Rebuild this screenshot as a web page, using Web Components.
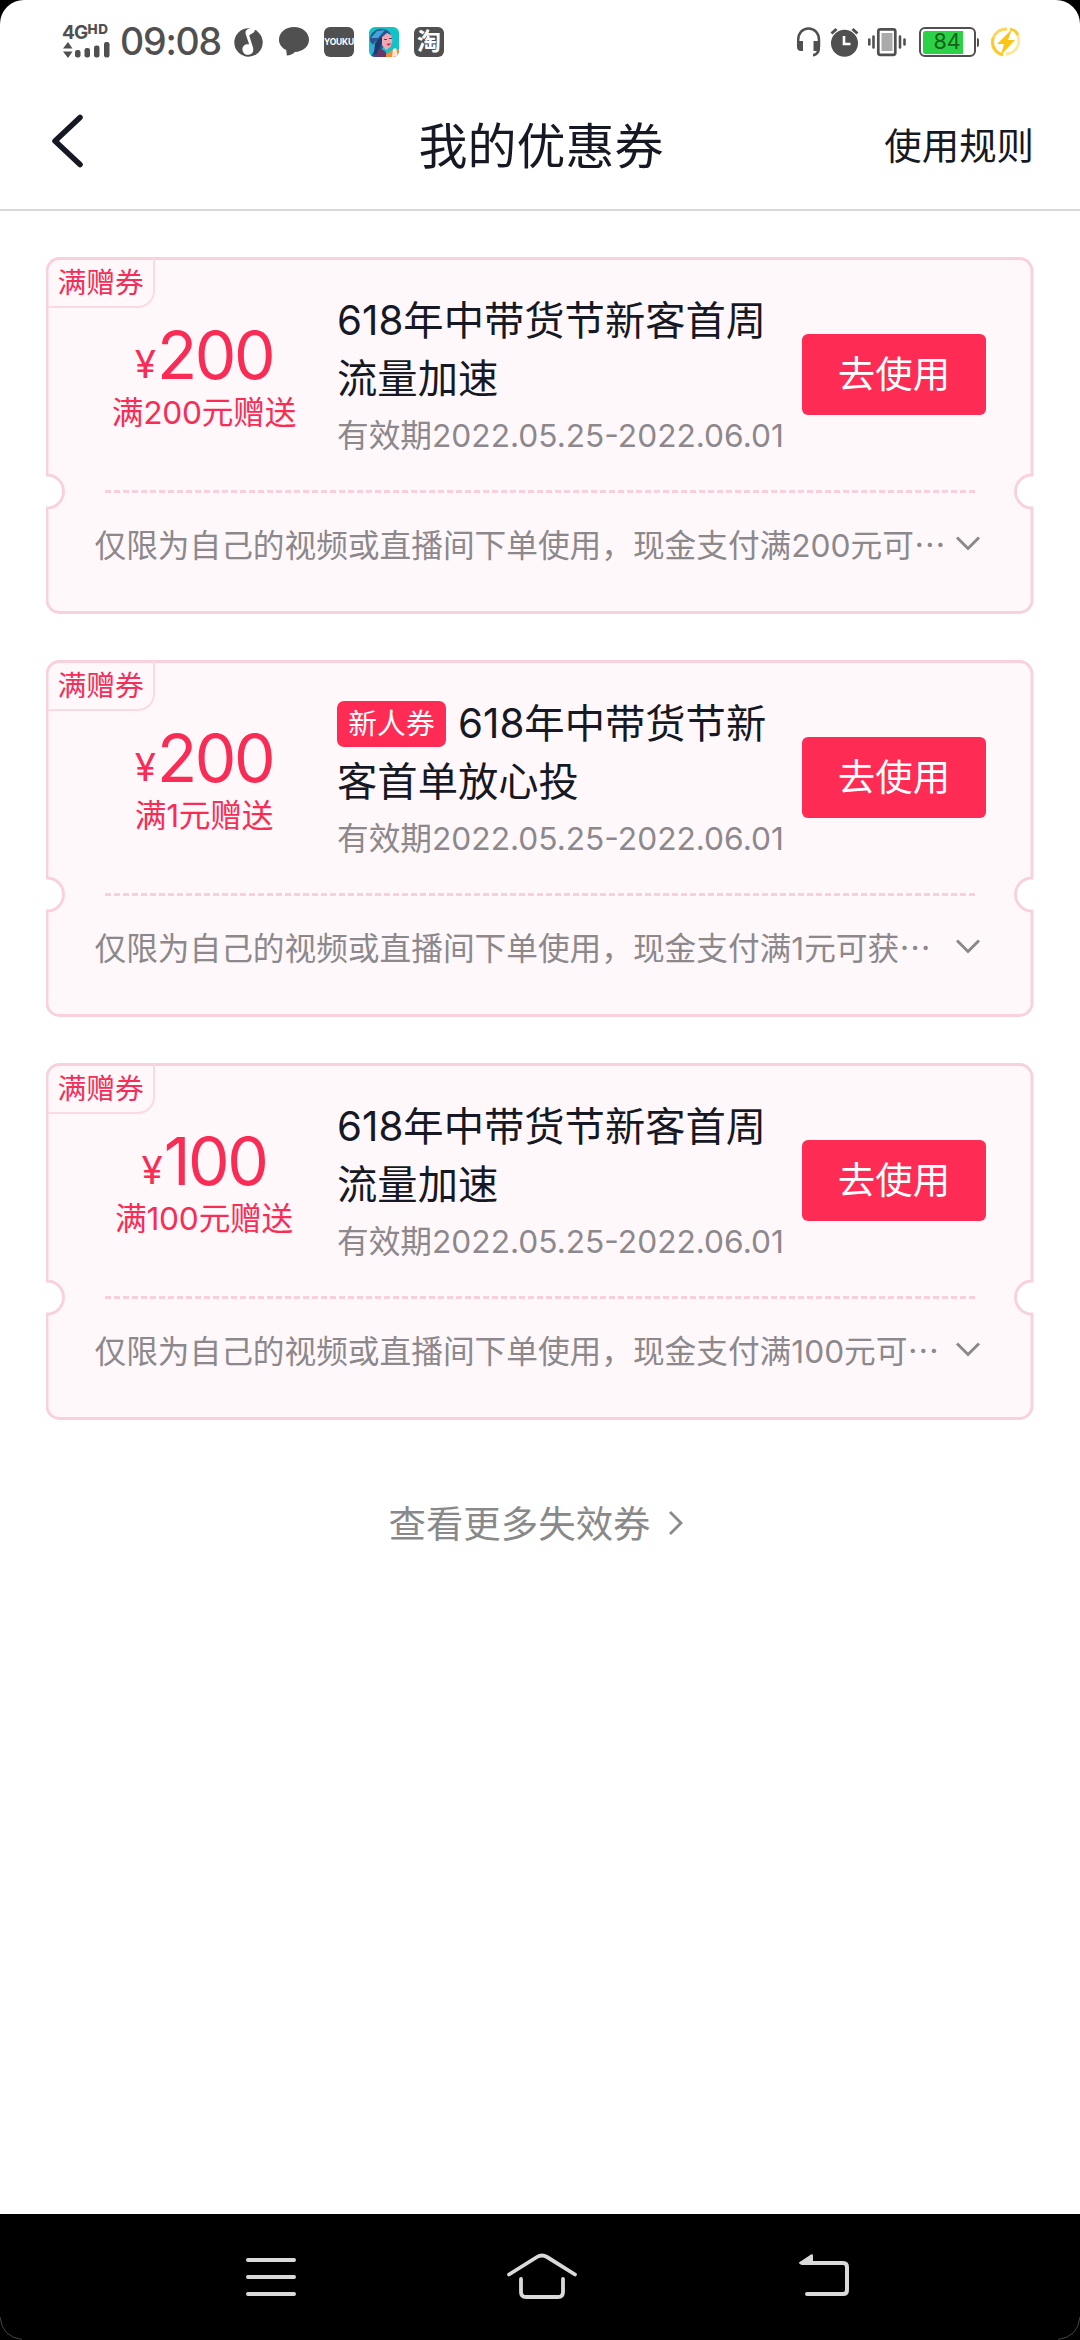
<!DOCTYPE html>
<html lang="zh-CN">
<head>
<meta charset="utf-8">
<title>我的优惠券</title>
<style>
html,body{margin:0;padding:0;background:#000}
body{width:1080px;height:2340px;overflow:hidden;font-family:Inter,"Noto Sans CJK SC",sans-serif;color:#161823}
</style>
</head>
<body>
<coupon-app></coupon-app>
<script>
const define = (name, html, setup) => customElements.define(name, class extends HTMLElement {
  constructor() {
    super();
    const t = document.createElement('template');
    t.innerHTML = html;
    this.attachShadow({mode: 'open'}).append(t.content.cloneNode(true));
  }
  connectedCallback() { if (setup) setup(this, this.shadowRoot); }
});

define('status-bar', `
<style>
:host{display:flex;height:82px;box-sizing:border-box;padding:0 58px 0 62px;justify-content:space-between;color:#505050}
.g{display:flex;align-items:center;height:84px}
svg{display:block;flex:none}
.net{display:flex;flex-direction:column;width:48px;height:35px;margin-top:-2px}
.lbl{display:flex;align-items:flex-start;font-weight:700;font-size:19px;line-height:17px;height:17px;letter-spacing:-.8px}
.lbl small{font-size:13.500px;line-height:11px;letter-spacing:.6px;font-weight:800}
.time{font-size:37.5px;font-weight:500;line-height:40px;width:101px;margin-left:10px;white-space:nowrap;letter-spacing:-1.200px}
.app{display:flex;align-items:center;justify-content:center;width:30px;height:30px;border-radius:6px;background:#505050;color:#fff;line-height:1;white-space:nowrap}
.yk{font-size:8.500px;font-weight:700;margin-left:15px;letter-spacing:-.2px}
.tb{font-size:24px;font-weight:700;margin-left:15px}
.bat{display:flex;align-items:center;justify-content:center;box-sizing:border-box;width:57px;height:30px;border:2.5px solid #505050;border-radius:6px;background:linear-gradient(90deg,#2bd245 41px,#fff 41px) content-box;padding:1.5px;color:#17601f;font-size:21.500px;line-height:1}
.cap{width:2.500px;height:9px;background:#505050;margin-left:1px;border-radius:0 2px 2px 0}
</style>
<div class="g">
 <div class="net"><div class="lbl">4G<small>HD</small></div>
 <svg width="48" height="18" viewBox="0 0 48 18" fill="#505050"><path d="M1 7.5 6 1l4.500 6.500zM1 10.500h9.500L6 17z"/><rect x="13" y="9" width="5.500" height="7.500" rx="2.200"/><rect x="22.500" y="7" width="5.500" height="9.500" rx="2.200"/><rect x="32" y="4.500" width="5.500" height="12" rx="2.200"/><rect x="42" y="1" width="5.500" height="15.500" rx="2.200"/></svg></div>
 <div class="time">09:08</div>
 <svg style="margin-left:13px" width="29" height="30" viewBox="0 0 29 30"><circle cx="14.500" cy="15.500" r="14.200" fill="#505050"/><path d="M21 0c-1 1.500-4 .6-7 2-2.200 1-3 2.800-2.200 5.500l3.400 10c-3-1-6.600.8-6.800 4.500-.1 3.600 2.600 6 6 5.800 4-.3 5.600-3.300 4.600-7.300L15.200 8.500C18 5.500 21.500 7 21 0z" fill="#fff"/></svg>
 <svg style="margin-left:16px" width="30" height="30" viewBox="0 0 30 30"><path d="M15 0C6.500 0 0 5.500 0 12.700c0 4.600 2.800 8.300 7.200 10.300L7.800 28.500c3 0 6.400-1.300 8-3.500C24 24.500 30 19.500 30 12.700 30 5.500 23.500 0 15 0z" fill="#505050"/></svg>
 <div class="app yk">YOUKU</div>
 <svg style="margin-left:15px" width="30" height="30" viewBox="0 0 30 30"><defs><clipPath id="c"><rect width="30" height="30" rx="6"/></clipPath></defs><g clip-path="url(#c)"><path fill="#12c2c6" d="M0 0h30v30H0z"/><path fill="#27558f" d="M1 14C0 6 8 1 13 2c5 0 8 3 9 6l-7 9-5 13H2l4-9z"/><path fill="#42a6dc" d="M2 11 8 4l8-1-7 8zM0 22l7-8 3 2-6 10z"/><path fill="#183a6c" d="M6 16l7-7 7-2-7 7-4 13H5z"/><path fill="#efa7b4" d="M13 10l5-4 4 2 1.500 5-2 7-4.500 3-4-5z"/><path fill="#c62f60" d="M17 17l5-1-2 3z"/><path fill="#633769" d="M15 12h3v1h-3zM20 11h3v1h-3zM10 21l6 3 3 6H6z"/><path fill="#f08b43" d="M17 27l7-4 6-1v8H17z"/><path fill="#ffe8ce" d="M24 22l3-1 2 8-6 1z"/></g></svg>
 <div class="app tb">淘</div>
</div>
<div class="g">
 <svg width="26" height="30" viewBox="0 0 26 30"><path d="M2.200 20V13C2.200 6 6.500 1.500 12.500 1.500S23 6 23 13v7" fill="none" stroke="#505050" stroke-width="2.500"/><path d="M1 14h6v10H5c-3 0-4-2-4-4zM17.500 14H24v8c0 4-3 7-7 7.500v-2.800c2-.3 3.400-1 3.800-2.700h-3.300z" fill="#505050"/></svg>
 <svg style="margin-left:8px" width="30" height="30" viewBox="0 0 30 30"><circle cx="14.500" cy="16.300" r="13.500" fill="#505050"/><path d="M1.500 6.500 6.500 2M27.500 6.500l-5-4.500" stroke="#505050" stroke-width="3"/><path d="M14 9v8h6.500" fill="none" stroke="#fff" stroke-width="2.600"/></svg>
 <svg style="margin-left:8px" width="38" height="30" viewBox="0 0 38 30"><path d="M1.300 12.500v5M5.500 9.500v11M32 9.500v11M36.500 12.500v5" stroke="#505050" stroke-width="2.600" stroke-linecap="round"/><rect x="10.300" y="2.300" width="17" height="25.500" rx="2" fill="#fff" stroke="#505050" stroke-width="2.700"/><path d="M13.500 6h11v18h-11z" fill="#aaa"/></svg>
 <div class="bat" style="margin-left:13px">84</div><div class="cap"></div>
 <svg style="margin-left:11px" width="32" height="32" viewBox="0 0 32 32"><g fill="none" stroke-width="2.800"><path d="M13 29C5 27 1 21 3 13 5 6 10 3 17 3" stroke="#fbd65a"/><path d="M25 6c5 5 5 13 0 18-3 3-6 4-9 4" stroke="#fde79a"/><path d="M20 3c5 1 7 3 8 6M3 12c-2 8 3 15 10 17" stroke="#fcc92d"/></g><path d="M22 3 7 18h7l-3 11 14-15h-7z" fill="#fcc414"/></svg>
</div>`);

define('page-header', `
<style>
:host{display:grid;grid-template-columns:1fr auto 1fr;align-items:center;height:129px;box-sizing:border-box;border-bottom:2px solid #d9d9db;padding:2px 46px 0 48px}
svg{display:block;margin-top:-12px}
.t{font-size:49px;line-height:60px}
.r{font-size:37.440px;line-height:50px;justify-self:end}
</style>
<svg width="36" height="56" viewBox="0 0 36 56"><path d="M32 4.500 7 28l25 23.500" fill="none" stroke="#161823" stroke-width="5.500" stroke-linecap="round" stroke-linejoin="round"/></svg>
<div class="t"><slot></slot></div><div class="r"><slot name="action"></slot></div>`);

define('use-button', `
<style>
:host{display:flex;align-items:center;justify-content:center;width:184px;height:81px;border-radius:6px;background:#fe2c55;color:#fff;font-size:37.440px;line-height:1;flex:none}
</style><slot></slot>`);

define('coupon-card', `
<style>
:host{display:block;width:988px;height:357px;position:relative}
.bg{position:absolute;inset:0;display:block}
.card{position:relative;display:flex;flex-direction:column;height:357px}
.tag{position:absolute;left:2px;top:1px;width:105px;height:48px;border-right:2.500px solid #fbdae4;border-bottom:2.500px solid #fbdae4;border-radius:0 0 17px 0;font-size:28.800px;line-height:49px;text-indent:9.500px;color:#f32e58;white-space:nowrap}
.top{display:flex;height:233px;padding-right:48px}
.amt{width:291px;padding-left:25px;box-sizing:border-box;display:flex;flex-direction:column;align-items:center;color:#f92c56;padding-top:60px}
.num{display:flex;align-items:baseline;line-height:76px;height:76px;font-size:66px;letter-spacing:-2.400px}
.num small{font-size:38.500px;letter-spacing:0;position:relative;top:-1.500px;margin-right:1px}
.cap{font-size:31.680px;line-height:40px;white-space:nowrap}
.cap{letter-spacing:-.2px}
.info{flex:1;padding-top:35px;min-width:0}
.title{display:block;font-size:40.320px;line-height:57.500px;width:440px;height:115px}
.date{font-size:31.680px;line-height:40px;margin-top:9px;color:#8c888c;white-space:nowrap}
use-button{margin-top:77px}
.new{display:inline-block;vertical-align:top;margin:6px 12px 0 0;width:109px;height:46px;border-radius:7px;background:#fe2c55;color:#fff;font-size:28.800px;line-height:46px;text-align:center}
.line{height:3px;margin:0 58px 0 58.500px;background:repeating-linear-gradient(90deg,#f9cfdc 0 6px,transparent 6px 9px)}
.desc{display:flex;justify-content:space-between;align-items:center;height:99px;padding:0 53px 0 48.500px;font-size:31.680px;color:#8c888c;white-space:nowrap}
.desc svg{margin-top:2px}
.e{font-family:"Noto Sans CJK SC",sans-serif}
</style>
<svg class="bg" width="988" height="357" viewBox="0 0 988 357"><path d="M14 1.500H974A12.500 12.500 0 0 1 986.500 14V218A16.500 16.500 0 0 0 986.500 251V343A12.500 12.500 0 0 1 974 355.500H14A12.500 12.500 0 0 1 1.500 343V251A16.500 16.500 0 0 0 1.500 218V14A12.500 12.500 0 0 1 14 1.500z" fill="#fff8fb" stroke="#f8d1dd" stroke-width="2.900" transform="translate(-.5 0)"/></svg>
<div class="card">
 <div class="tag">满赠券</div>
 <div class="top">
  <div class="amt"><div class="num"><small>¥</small><span id="n"></span></div><div class="cap" id="c"></div></div>
  <div class="info"><div class="title"><span class="new" id="b">新人券</span><slot></slot></div><div class="date">有效期<span class="d">2022.05.25-2022.06.01</span></div></div>
  <use-button>去使用</use-button>
 </div>
 <div class="line"></div>
 <div class="desc"><div><span id="d"></span><span class="e">…</span></div><svg width="26" height="18" viewBox="0 0 26 18"><path d="M2 2.500l11 11L24 2.500" fill="none" stroke="#8c888c" stroke-width="3"/></svg></div>
</div>`, (el, r) => {
  r.getElementById('n').textContent = el.getAttribute('amount');
  r.getElementById('c').textContent = el.getAttribute('condition');
  r.getElementById('d').textContent = el.getAttribute('note');
  if (!el.hasAttribute('newcomer')) r.getElementById('b').remove();
});

define('more-link', `
<style>
:host{display:flex;align-items:center;justify-content:center;height:56px;font-size:37.440px;color:#898989;gap:17px;padding-right:6px}
svg{display:block;margin-top:2px}
</style><slot></slot><svg width="18" height="28" viewBox="0 0 18 28"><path d="M3 3l11 11L3 25" fill="none" stroke="#898989" stroke-width="2.800"/></svg>`);

define('nav-bar', `
<style>
:host{display:flex;height:126px;box-sizing:border-box;padding-bottom:2px;background:#000;align-items:stretch;position:relative}
.k{display:flex;flex:none;align-items:center;justify-content:center}
.k:nth-of-type(1){width:542px}.k:nth-of-type(2){width:0}.k:nth-of-type(3){width:565px}
svg{display:block;flex:none}
.arc{position:absolute;bottom:0;left:0}
</style>
<div class="k"><svg width="52" height="44" viewBox="0 0 52 44"><path d="M3 6h46M3 23h46M3 40h46" stroke="#dadada" stroke-width="4" stroke-linecap="round"/></svg></div>
<div class="k"><svg width="74" height="48" viewBox="0 0 74 48"><path d="M4 22.500 32 5q5-3 10 0l28 17.500M16 27v13q0 5 5 5h32q5 0 5-5V27" fill="none" stroke="#dadada" stroke-width="3.800" stroke-linecap="round"/></svg></div>
<div class="k"><svg width="54" height="44" viewBox="0 0 54 44"><path d="M9 40h36q4 0 4-4V13q0-4-4-4H4" fill="none" stroke="#dadada" stroke-width="4" stroke-linecap="round"/><path d="M1 8.500 13 .5q2-1 2 1V10H3q-2.500 0-2-1.500z" fill="#dadada"/></svg></div>
<svg class="arc" width="1080" height="24" viewBox="0 0 1080 24"><path d="M0 1q2 20 22 22.500M1080 1q-2 20-22 22.500" fill="none" stroke="#444" stroke-width="1"/></svg>`);

define('coupon-app', `
<style>
:host{display:flex;flex-direction:column;width:1080px;height:2340px}
main{flex:1;background:#fff;border-radius:24px 24px 0 0}
.list{display:flex;flex-direction:column;gap:46px;padding:46px 0 0 46px}
more-link{margin-top:74px}
</style>
<main>
<status-bar></status-bar>
<page-header>我的优惠券<span slot="action">使用规则</span></page-header>
<div class="list">
<coupon-card amount="200" condition="满200元赠送" note="仅限为自己的视频或直播间下单使用，现金支付满200元可">618年中带货节新客首周流量加速</coupon-card>
<coupon-card newcomer amount="200" condition="满1元赠送" note="仅限为自己的视频或直播间下单使用，现金支付满1元可获"><span>618年中带货节新</span><span>客首单放心投</span></coupon-card>
<coupon-card amount="100" condition="满100元赠送" note="仅限为自己的视频或直播间下单使用，现金支付满100元可">618年中带货节新客首周流量加速</coupon-card>
</div>
<more-link>查看更多失效券</more-link>
</main>
<nav-bar></nav-bar>`);
</script>
</body>
</html>
